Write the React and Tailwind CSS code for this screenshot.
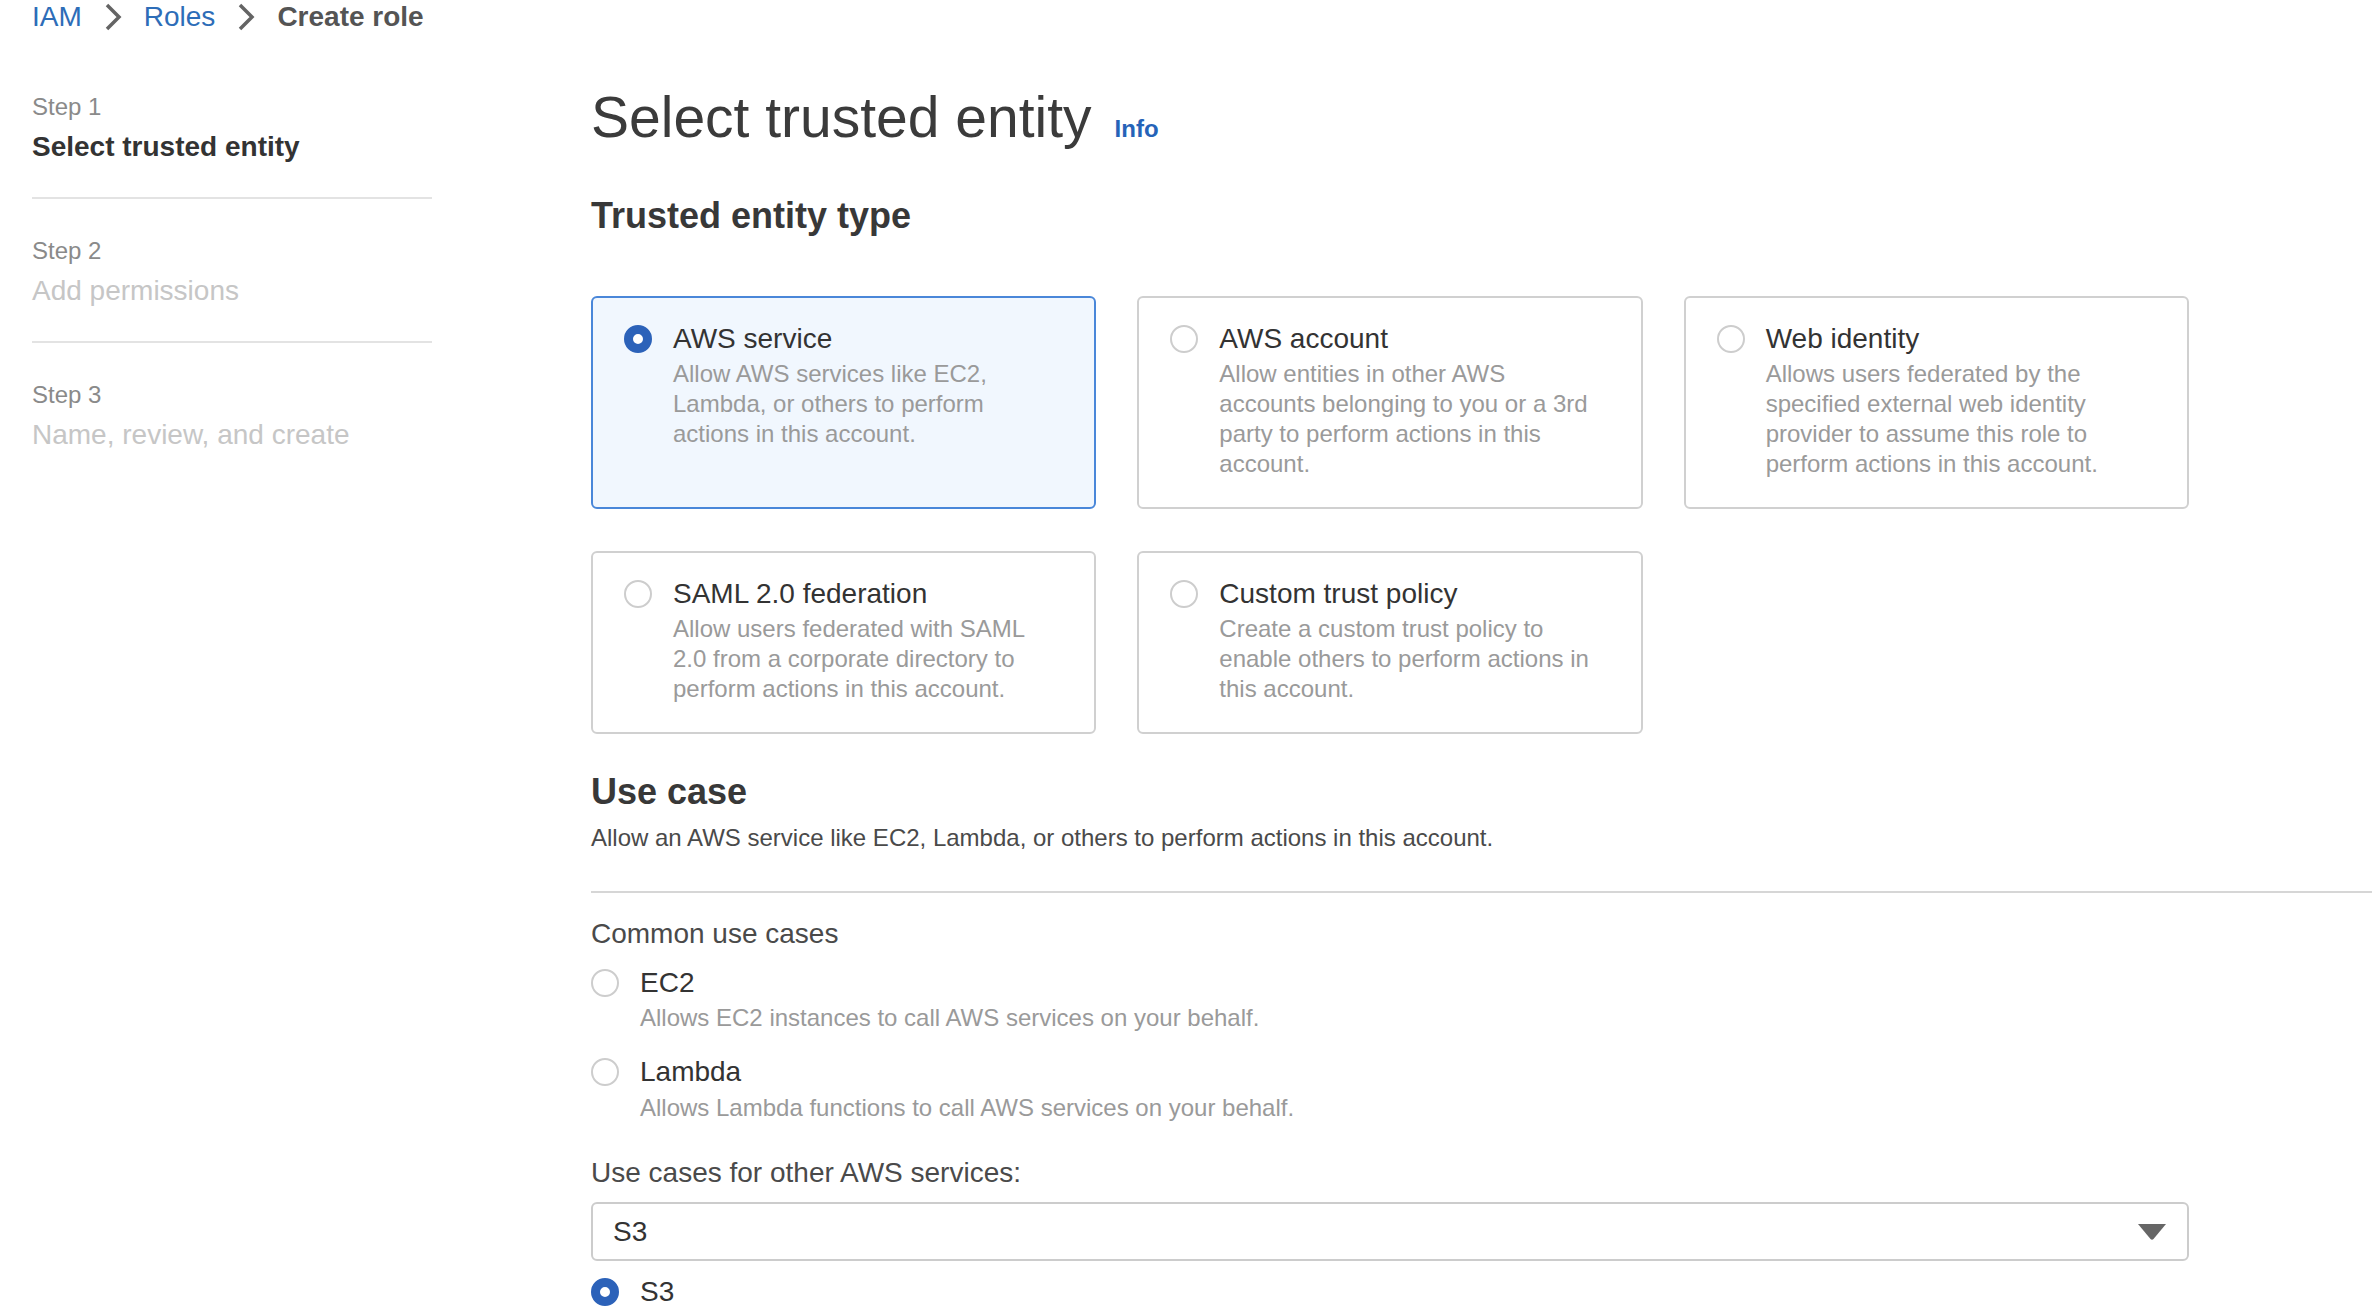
import React, { useState } from 'react';

const entityTypes = [
  {
    id: 'service',
    title: 'AWS service',
    text: 'Allow AWS services like EC2, Lambda, or others to perform actions in this account.',
  },
  {
    id: 'account',
    title: 'AWS account',
    text: 'Allow entities in other AWS accounts belonging to you or a 3rd party to perform actions in this account.',
  },
  {
    id: 'web',
    title: 'Web identity',
    text: 'Allows users federated by the specified external web identity provider to assume this role to perform actions in this account.',
  },
  {
    id: 'saml',
    title: 'SAML 2.0 federation',
    text: 'Allow users federated with SAML 2.0 from a corporate directory to perform actions in this account.',
  },
  {
    id: 'custom',
    title: 'Custom trust policy',
    text: 'Create a custom trust policy to enable others to perform actions in this account.',
  },
];

const steps = [
  { label: 'Step 1', title: 'Select trusted entity', active: true },
  { label: 'Step 2', title: 'Add permissions' },
  { label: 'Step 3', title: 'Name, review, and create' },
];

function Radio({ checked }) {
  return checked ? (
    <span className="block w-[28px] h-[28px] shrink-0 rounded-full border-[9px] border-[#2c62b9] bg-white" />
  ) : (
    <span className="block w-[28px] h-[28px] shrink-0 rounded-full border-2 border-[#cdcdcd] bg-white" />
  );
}

function Chevron() {
  return (
    <svg width="18" height="28" viewBox="0 0 18 28" className="mx-[22px]">
      <path d="M3 2 L15 14 L3 26" fill="none" stroke="#646464" strokeWidth="3.5" />
    </svg>
  );
}

export default function App() {
  const [entity, setEntity] = useState('service');
  const [useCase, setUseCase] = useState('s3');

  return (
    <div className="min-h-screen bg-white font-['Liberation_Sans',Arial,sans-serif] pb-[8px]">
      {/* breadcrumb */}
      <div className="flex items-center h-[34px] px-[32px] text-[28px]">
        <span className="text-[#2d6db8]">IAM</span>
        <Chevron />
        <span className="text-[#2d6db8]">Roles</span>
        <Chevron />
        <span className="text-[#545454] font-bold">Create role</span>
      </div>

      <div className="flex">
        {/* steps */}
        <div className="w-[400px] ml-[32px] shrink-0 pt-[57px]">
          {steps.map((s, i) => (
            <div
              key={s.label}
              className={
                i < steps.length - 1
                  ? 'pb-[30px] border-b-2 border-[#e3e3e3] ' + (i > 0 ? 'pt-[36px]' : '')
                  : 'pt-[36px]'
              }
            >
              <div className="text-[24px] leading-[32px] text-[#8a8a8a]">{s.label}</div>
              <div
                className={
                  s.active
                    ? 'mt-[4px] text-[28px] leading-[40px] font-bold text-[#333]'
                    : 'mt-[4px] text-[28px] leading-[40px] text-[#c6c6c6]'
                }
              >
                {s.title}
              </div>
            </div>
          ))}
        </div>

        {/* main */}
        <div className="flex-1 ml-[159px]">
          <div className="mt-[49px] flex items-baseline">
            <h1 className="text-[57px] leading-[68px] text-[#3b3b3b]">Select trusted entity</h1>
            <span className="ml-[23px] text-[24px] font-bold text-[#2563b8]">Info</span>
          </div>

          <h2 className="mt-[43px] text-[36px] leading-[44px] font-bold text-[#383838]">
            Trusted entity type
          </h2>

          <div className="mt-[58px] w-[1598px] grid grid-cols-3 gap-x-[41px] gap-y-[42px]">
            {entityTypes.map((e) => {
              const on = entity === e.id;
              return (
                <div
                  key={e.id}
                  onClick={() => setEntity(e.id)}
                  className={
                    on
                      ? 'flex pl-[31px] pt-[24px] pb-[28px] rounded-[6px] border-2 border-[#4a87d9] bg-[#f1f7fe] cursor-pointer'
                      : 'flex pl-[31px] pt-[24px] pb-[28px] rounded-[6px] border-2 border-[#d0d0d0] bg-white cursor-pointer'
                  }
                >
                  <div className="h-[34px] flex items-center">
                    <Radio checked={on} />
                  </div>
                  <div className="ml-[21px] max-w-[380px]">
                    <div className="text-[28px] leading-[34px] text-[#333]">{e.title}</div>
                    <div className="mt-[3px] text-[24px] leading-[30px] text-[#9a9a9a]">{e.text}</div>
                  </div>
                </div>
              );
            })}
          </div>

          <h2 className="mt-[36px] text-[36px] leading-[44px] font-bold text-[#383838]">Use case</h2>
          <p className="mt-[9px] text-[24px] leading-[30px] text-[#4a4a4a]">
            Allow an AWS service like EC2, Lambda, or others to perform actions in this account.
          </p>

          <div className="mt-[38px] h-[2px] bg-[#d6d6d6]" />

          <div className="mt-[24px] text-[28px] leading-[34px] text-[#4a4a4a]">Common use cases</div>

          <div className="mt-[15px] flex cursor-pointer" onClick={() => setUseCase('ec2')}>
            <div className="h-[34px] flex items-center">
              <Radio checked={useCase === 'ec2'} />
            </div>
            <div className="ml-[21px]">
              <div className="text-[28px] leading-[34px] text-[#333]">EC2</div>
              <div className="mt-[3px] text-[24px] leading-[30px] text-[#9a9a9a]">
                Allows EC2 instances to call AWS services on your behalf.
              </div>
            </div>
          </div>

          <div className="mt-[22px] flex cursor-pointer" onClick={() => setUseCase('lambda')}>
            <div className="h-[34px] flex items-center">
              <Radio checked={useCase === 'lambda'} />
            </div>
            <div className="ml-[21px]">
              <div className="text-[28px] leading-[34px] text-[#333]">Lambda</div>
              <div className="mt-[4px] text-[24px] leading-[30px] text-[#9a9a9a]">
                Allows Lambda functions to call AWS services on your behalf.
              </div>
            </div>
          </div>

          <div className="mt-[33px] text-[28px] leading-[34px] text-[#4a4a4a]">
            Use cases for other AWS services:
          </div>

          <div className="mt-[12px] w-[1598px] h-[59px] flex items-center justify-between pl-[20px] pr-[20px] rounded-[6px] border-2 border-[#cccccc] bg-white">
            <span className="text-[28px] text-[#333]">S3</span>
            <svg width="30" height="18" viewBox="0 0 30 18">
              <path d="M1 1 H29 L16.5 16 Q15 17.5 13.5 16 Z" fill="#666" />
            </svg>
          </div>

          <div className="mt-[14px] flex cursor-pointer" onClick={() => setUseCase('s3')}>
            <div className="h-[34px] flex items-center">
              <Radio checked={useCase === 's3'} />
            </div>
            <div className="ml-[21px] text-[28px] leading-[34px] text-[#333]">S3</div>
          </div>
        </div>
      </div>
    </div>
  );
}
